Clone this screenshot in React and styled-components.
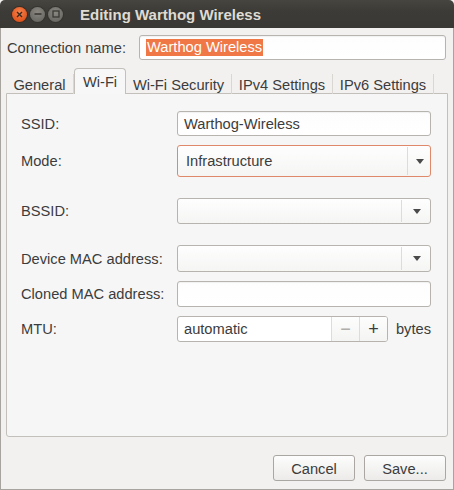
import React from "react";
import styled, { createGlobalStyle, css } from "styled-components";

const Global = createGlobalStyle`
  html, body {
    margin: 0;
    padding: 0;
    background: #f2f1f0;
  }
  * {
    box-sizing: border-box;
  }
  body {
    font-family: "Liberation Sans", Arial, sans-serif;
    font-size: 14.67px;
    color: #3c3c3c;
  }
`;

const Frame = styled.div`
  width: 454px;
  height: 490px;
  display: flex;
  flex-direction: column;
  background: #f2f1f0;
`;

const TitleBar = styled.div`
  height: 28px;
  flex: 0 0 28px;
  display: flex;
  align-items: center;
  padding-left: 12px;
  gap: 3px;
  background: linear-gradient(#46453f, #3c3b37 40%, #393834);
  border-radius: 5px 5px 0 0;
`;

const WinButton = styled.span`
  width: 15px;
  height: 15px;
  border-radius: 50%;
  display: flex;
  align-items: center;
  justify-content: center;
  ${(p) =>
    p.$close
      ? css`
          background: radial-gradient(circle at 50% 35%, #f6834c, #e2561f 70%, #b9431a);
          box-shadow: 0 0 0 1px #3a2e26;
        `
      : css`
          background: radial-gradient(circle at 50% 35%, #8a8881, #6d6b65 70%, #55534e);
          box-shadow: 0 0 0 1px #35342f;
        `}
`;

const Title = styled.span`
  margin-left: 14px;
  font-size: 15px;
  font-weight: bold;
  color: #dfdbd2;
`;

const Body = styled.div`
  flex: 1;
  display: flex;
  flex-direction: column;
  padding: 7px 5px 0 5px;
  border: 1px solid #a7a49f;
  border-top: none;
`;

const NameRow = styled.div`
  display: flex;
  align-items: center;
  height: 25px;
`;

const NameLabel = styled.span`
  width: 133px;
  padding-left: 1px;
`;

const Entry = styled.div`
  height: ${(p) => p.$h || 25}px;
  width: ${(p) => (p.$w ? `${p.$w}px` : "100%")};
  display: flex;
  align-items: center;
  padding-left: 6px;
  background: linear-gradient(#fdfdfd, #ffffff);
  border: 1px solid #b7b4af;
  border-radius: 3px;
  box-shadow: inset 0 1px 1px rgba(0, 0, 0, 0.05);
`;

const Selected = styled.span`
  background: #f07746;
  color: #ffffff;
  padding: 0 1px;
  line-height: 17px;
`;

const Tabs = styled.div`
  display: flex;
  align-items: flex-end;
  margin-top: 8px;
  height: 26px;
  margin-bottom: -1px;
  position: relative;
  z-index: 1;
`;

const Tab = styled.div`
  width: ${(p) => p.$w}px;
  display: flex;
  align-items: center;
  justify-content: center;
  ${(p) =>
    p.$active
      ? css`
          height: 26px;
          background: #f7f7f7;
          border: 1px solid #c3c0bb;
          border-bottom: none;
          border-radius: 4px 4px 0 0;
        `
      : css`
          height: 20px;
          border-right: 1px solid #dad7d3;
          padding-top: 1px;
        `}
`;

const Panel = styled.div`
  height: 344px;
  width: 442px;
  background: #f6f6f6;
  border: 1px solid #c3c0bb;
  border-radius: 0 0 3px 3px;
  padding: 17px 16px 0 14px;
  display: flex;
  flex-direction: column;
`;

const Row = styled.div`
  display: flex;
  align-items: center;
  margin-top: ${(p) => p.$top || 0}px;
`;

const Label = styled.span`
  width: 156px;
  flex: 0 0 156px;
`;

const Combo = styled.div`
  flex: 1;
  height: ${(p) => p.$h}px;
  display: flex;
  align-items: center;
  background: linear-gradient(#fefefe, #f5f5f4);
  border: 1px solid ${(p) => (p.$focus ? "#e0896a" : "#b7b4af")};
  border-radius: 3px;
`;

const ComboText = styled.span`
  flex: 1;
  padding-left: 8px;
`;

const ComboSep = styled.span`
  align-self: stretch;
  width: ${(p) => p.$w}px;
  border-left: 1px solid #dedcd8;
  display: flex;
  align-items: center;
  justify-content: center;
  margin: 1px 0;
`;

const Arrow = styled.span`
  width: 0;
  height: 0;
  border-left: 4px solid transparent;
  border-right: 4px solid transparent;
  border-top: 5px solid #4a4a4a;
  margin-left: 1px;
`;

const Spin = styled.div`
  width: 211px;
  height: 26px;
  display: flex;
  border: 1px solid #b7b4af;
  border-radius: 3px;
  background: #ffffff;
  overflow: hidden;
`;

const SpinText = styled.span`
  flex: 1;
  display: flex;
  align-items: center;
  padding-left: 6px;
`;

const SpinBtn = styled.span`
  width: 28px;
  display: flex;
  align-items: center;
  justify-content: center;
  border-left: 1px solid #dedcd8;
  background: linear-gradient(#fdfdfd, #f4f4f3);
  color: ${(p) => (p.$dim ? "#b0aeaa" : "#3c3c3c")};
  font-size: 18px;
`;

const Unit = styled.span`
  margin-left: 8px;
`;

const Actions = styled.div`
  display: flex;
  justify-content: flex-end;
  gap: 9px;
  margin-top: 18px;
  padding-right: 2px;
`;

const Button = styled.button`
  width: 82px;
  height: 26px;
  font: inherit;
  color: #3c3c3c;
  background: linear-gradient(#fdfdfd, #ecebe9);
  border: 1px solid #aaa7a2;
  border-radius: 3px;
  padding: 0;
  padding-top: 1px;
`;

export default function App() {
  return (
    <>
      <Global />
      <Frame>
        <TitleBar>
          <WinButton $close>
            <svg width="7" height="7" viewBox="0 0 7 7">
              <path d="M1 1L6 6M6 1L1 6" stroke="#3b2a20" strokeWidth="1.4" />
            </svg>
          </WinButton>
          <WinButton>
            <svg width="8" height="8" viewBox="0 0 8 8">
              <path d="M0.5 4H7.5" stroke="#3a3935" strokeWidth="1.6" />
            </svg>
          </WinButton>
          <WinButton>
            <svg width="8" height="8" viewBox="0 0 8 8">
              <rect x="1" y="1" width="6" height="6" fill="none" stroke="#3a3935" strokeWidth="1.3" />
            </svg>
          </WinButton>
          <Title>Editing Warthog Wireless</Title>
        </TitleBar>
        <Body>
          <NameRow>
            <NameLabel>Connection name:</NameLabel>
            <Entry $w={307}>
              <Selected>Warthog Wireless</Selected>
            </Entry>
          </NameRow>
          <Tabs>
            <Tab $w={68}>General</Tab>
            <Tab $w={52} $active>
              Wi-Fi
            </Tab>
            <Tab $w={106}>Wi-Fi Security</Tab>
            <Tab $w={101}>IPv4 Settings</Tab>
            <Tab $w={101}>IPv6 Settings</Tab>
          </Tabs>
          <Panel>
            <Row>
              <Label>SSID:</Label>
              <Entry>Warthog-Wireless</Entry>
            </Row>
            <Row $top={9}>
              <Label>Mode:</Label>
              <Combo $h={32} $focus>
                <ComboText>Infrastructure</ComboText>
                <ComboSep $w={23}>
                  <Arrow />
                </ComboSep>
              </Combo>
            </Row>
            <Row $top={21}>
              <Label>BSSID:</Label>
              <Combo $h={26}>
                <ComboText />
                <ComboSep $w={29}>
                  <Arrow />
                </ComboSep>
              </Combo>
            </Row>
            <Row $top={21}>
              <Label>Device MAC address:</Label>
              <Combo $h={27}>
                <ComboText />
                <ComboSep $w={29}>
                  <Arrow />
                </ComboSep>
              </Combo>
            </Row>
            <Row $top={9}>
              <Label>Cloned MAC address:</Label>
              <Entry $h={26} />
            </Row>
            <Row $top={9}>
              <Label>MTU:</Label>
              <Spin>
                <SpinText>automatic</SpinText>
                <SpinBtn $dim>−</SpinBtn>
                <SpinBtn>+</SpinBtn>
              </Spin>
              <Unit>bytes</Unit>
            </Row>
          </Panel>
          <Actions>
            <Button>Cancel</Button>
            <Button>Save...</Button>
          </Actions>
        </Body>
      </Frame>
    </>
  );
}
